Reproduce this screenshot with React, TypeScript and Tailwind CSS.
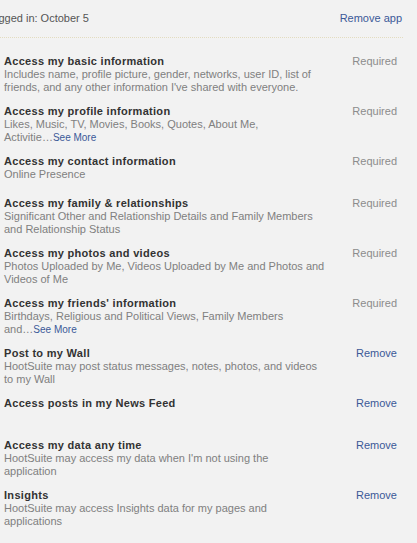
import React from 'react';

interface Permission {
  title: string;
  lines?: string[];
  more?: boolean;
  action: 'Required' | 'Remove';
}

// descriptions are pre-broken into lines so the wrap matches the original dialog
const permissions: Permission[] = [
  {
    title: 'Access my basic information',
    lines: [
      'Includes name, profile picture, gender, networks, user ID, list of',
      "friends, and any other information I've shared with everyone.",
    ],
    action: 'Required',
  },
  {
    title: 'Access my profile information',
    lines: ['Likes, Music, TV, Movies, Books, Quotes, About Me,', 'Activitie…'],
    more: true,
    action: 'Required',
  },
  { title: 'Access my contact information', lines: ['Online Presence'], action: 'Required' },
  {
    title: 'Access my family & relationships',
    lines: ['Significant Other and Relationship Details and Family Members', 'and Relationship Status'],
    action: 'Required',
  },
  {
    title: 'Access my photos and videos',
    lines: ['Photos Uploaded by Me, Videos Uploaded by Me and Photos and', 'Videos of Me'],
    action: 'Required',
  },
  {
    title: "Access my friends' information",
    lines: ['Birthdays, Religious and Political Views, Family Members', 'and…'],
    more: true,
    action: 'Required',
  },
  {
    title: 'Post to my Wall',
    lines: ['HootSuite may post status messages, notes, photos, and videos', 'to my Wall'],
    action: 'Remove',
  },
  { title: 'Access posts in my News Feed', action: 'Remove' },
  {
    title: 'Access my data any time',
    lines: ["HootSuite may access my data when I'm not using the", 'application'],
    action: 'Remove',
  },
  {
    title: 'Insights',
    lines: ['HootSuite may access Insights data for my pages and', 'applications'],
    action: 'Remove',
  },
];

export default function App() {
  return (
    <div
      className="w-[417px] h-[543px] overflow-hidden bg-[#f2f2f2] text-[11px] leading-[13px]"
      style={{ fontFamily: '"Liberation Sans", Arial, sans-serif' }}
    >
      {/* Header */}
      <div className="w-[437px] -ml-[34px] pt-[12px] pb-[12px] border-b border-dotted border-[#e3dcc0] flex justify-between">
        <span className="text-[#555]">Last logged in: October 5</span>
        <a className="text-[#3b5998] mr-[1px]">Remove app</a>
      </div>

      {/* Permissions */}
      <div className="pt-[17px] pl-[4px] w-[397px]">
        {permissions.map((p) => (
          <div key={p.title} className="flex min-h-[31px] mb-[11px]">
            <div className="w-[330px] whitespace-nowrap">
              <div className="font-bold text-[#333] tracking-[0.3px]">{p.title}</div>
              {p.lines?.map((line, i) => (
                <div key={i} className="text-[#808080]">
                  {line}
                  {p.more && i === p.lines!.length - 1 && (
                    <a className="text-[#3b5998] text-[10px]">See More</a>
                  )}
                </div>
              ))}
            </div>
            <div
              className={`flex-1 text-right ${
                p.action === 'Required' ? 'text-[#8c8c8c]' : 'text-[#3b5998]'
              }`}
            >
              {p.action}
            </div>
          </div>
        ))}
      </div>
    </div>
  );
}
